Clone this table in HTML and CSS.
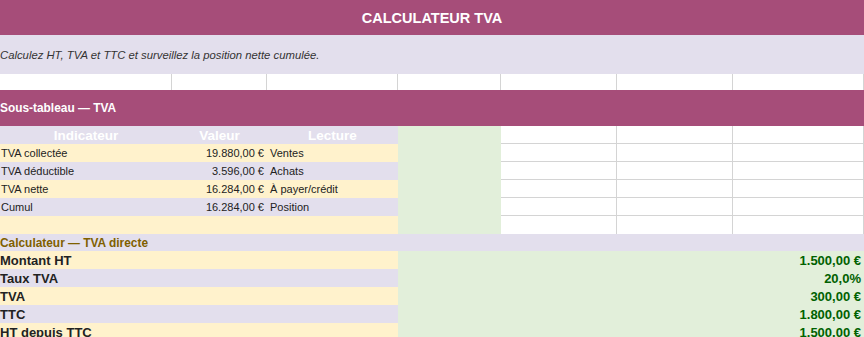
FILE: index.html
```html
<!DOCTYPE html>
<html lang="fr">
<head>
<meta charset="utf-8">
<title>Calculateur TVA</title>
<link rel="stylesheet" href="styles.css">
</head>
<body>
<div class="sheet">
  <div class="title span-all">CALCULATEUR TVA</div>
  <div class="subtitle span-all">Calculez HT, TVA et TTC et surveillez la position nette cumulée.</div>

  <div class="blank"></div><div class="blank"></div><div class="blank"></div><div class="blank"></div><div class="blank"></div><div class="blank"></div><div class="blank"></div>

  <div class="section span-all">Sous-tableau — TVA</div>

  <div class="head lav">Indicateur</div>
  <div class="head lav">Valeur</div>
  <div class="head lav">Lecture</div>
  <div class="greencol"></div>
  <div class="grid-cell"></div><div class="grid-cell"></div><div class="grid-cell"></div>

  <div class="lbl cream">TVA collectée</div>
  <div class="val cream">19.880,00 €</div>
  <div class="note cream">Ventes</div>
  <div class="grid-cell"></div><div class="grid-cell"></div><div class="grid-cell"></div>

  <div class="lbl lav">TVA déductible</div>
  <div class="val lav">3.596,00 €</div>
  <div class="note lav">Achats</div>
  <div class="grid-cell"></div><div class="grid-cell"></div><div class="grid-cell"></div>

  <div class="lbl cream">TVA nette</div>
  <div class="val cream">16.284,00 €</div>
  <div class="note cream">À payer/crédit</div>
  <div class="grid-cell"></div><div class="grid-cell"></div><div class="grid-cell"></div>

  <div class="lbl lav">Cumul</div>
  <div class="val lav">16.284,00 €</div>
  <div class="note lav">Position</div>
  <div class="grid-cell"></div><div class="grid-cell"></div><div class="grid-cell"></div>

  <div class="lbl cream"></div>
  <div class="val cream"></div>
  <div class="note cream"></div>
  <div class="grid-cell last"></div><div class="grid-cell last"></div><div class="grid-cell last"></div>

  <div class="calc-title span-all">Calculateur — TVA directe</div>

  <div class="calc-lbl cream">Montant HT</div>
  <div class="calc-val">1.500,00 €</div>
  <div class="calc-lbl lav">Taux TVA</div>
  <div class="calc-val">20,0%</div>
  <div class="calc-lbl cream">TVA</div>
  <div class="calc-val">300,00 €</div>
  <div class="calc-lbl lav">TTC</div>
  <div class="calc-val">1.800,00 €</div>
  <div class="calc-lbl cream">HT depuis TTC</div>
  <div class="calc-val">1.500,00 €</div>
</div>
</body>
</html>
```

FILE: styles.css
```css
html, body {
  margin: 0;
  padding: 0;
  background: #ffffff;
  overflow: hidden;
}

.sheet {
  display: grid;
  grid-template-columns: 172px 95px 131px 103px 116px 116px 131px;
  grid-template-rows: 35px 39px 16px 36px repeat(6, 18px) 17px repeat(5, 18px);
  width: 864px;
  font-family: "Liberation Sans", Arial, sans-serif;
  font-size: 11px;
  color: #222222;
}

.sheet > div {
  box-sizing: border-box;
  display: flex;
  align-items: center;
  white-space: nowrap;
  overflow: hidden;
}

.span-all {
  grid-column: 1 / -1;
}

.title {
  background: #a64d79;
  color: #ffffff;
  font-weight: bold;
  font-size: 14.5px;
  justify-content: center;
}

.subtitle {
  background: #e3dfed;
  color: #333333;
  font-style: italic;
  font-size: 11.3px;
}

.blank {
  background: #ffffff;
  border-right: 1px solid #d4d4d4;
}

.blank:first-child {
  border-right: 1px solid #d4d4d4;
}

.section {
  background: #a64d79;
  color: #ffffff;
  font-weight: bold;
  font-size: 11.9px;
}

.lav {
  background: #e3dfed;
}

.cream {
  background: #fff2cc;
}

.head {
  color: #ffffff;
  font-weight: bold;
  font-size: 13.5px;
  justify-content: center;
}

.greencol {
  grid-row: span 6;
  background: #e2efda;
}

.grid-cell {
  background: #ffffff;
  border-right: 1px solid #d4d4d4;
  border-bottom: 1px solid #d4d4d4;
}

.grid-cell.last {
  border-bottom: none;
}

.lbl {
  padding-left: 1px;
}

.val {
  justify-content: flex-end;
  padding-right: 3px;
}

.note {
  padding-left: 3px;
}

.calc-title {
  background: #e3dfed;
  color: #7f6000;
  font-weight: bold;
  font-size: 11.9px;
}

.calc-lbl {
  grid-column: 1 / 4;
  font-weight: bold;
  font-size: 13px;
  color: #222222;
}

.calc-val {
  grid-column: 4 / -1;
  background: #e2efda;
  justify-content: flex-end;
  padding-right: 3px;
  font-weight: bold;
  font-size: 13px;
  color: #006100;
}
```
